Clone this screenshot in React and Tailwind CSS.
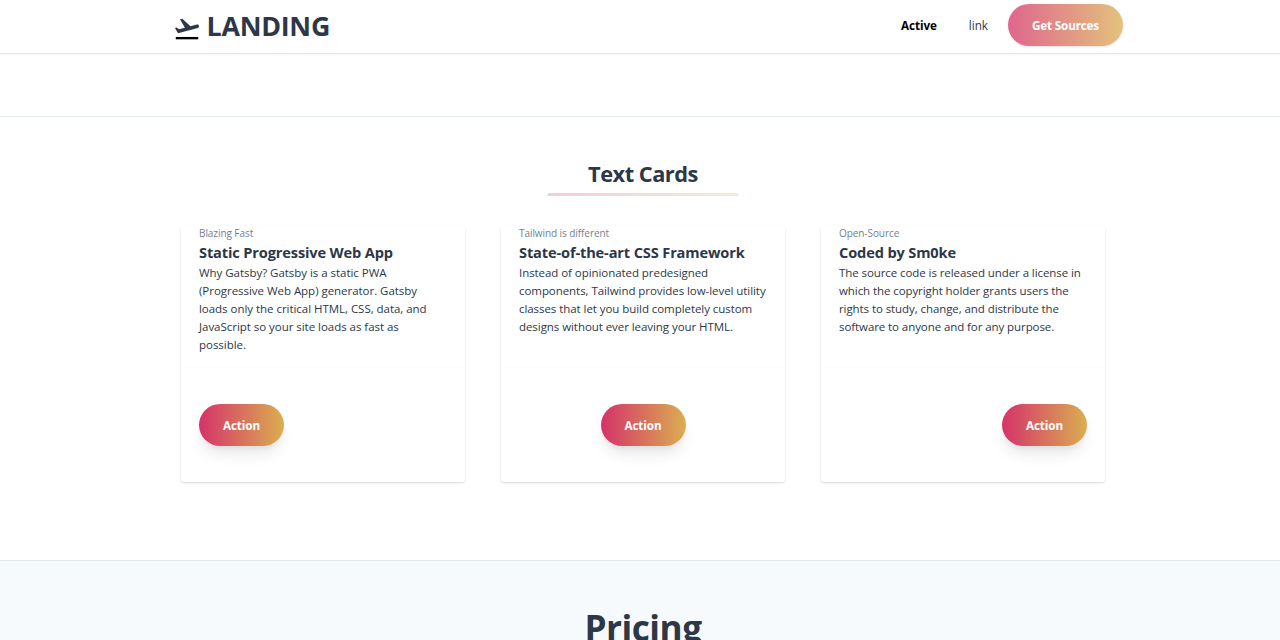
const cards = [
  {
    label: 'Blazing Fast',
    title: 'Static Progressive Web App',
    lines: [
      'Why Gatsby? Gatsby is a static PWA',
      '(Progressive Web App) generator. Gatsby',
      'loads only the critical HTML, CSS, data, and',
      'JavaScript so your site loads as fast as',
      'possible.',
    ],
    align: 'justify-start',
    tracking: 'tracking-[-0.035px]',
  },
  {
    label: 'Tailwind is different',
    title: 'State-of-the-art CSS Framework',
    lines: [
      'Instead of opinionated predesigned',
      'components, Tailwind provides low-level utility',
      'classes that let you build completely custom',
      'designs without ever leaving your HTML.',
    ],
    align: 'justify-center',
    tracking: 'tracking-[-0.06px]',
  },
  {
    label: 'Open-Source',
    title: 'Coded by Sm0ke',
    lines: [
      'The source code is released under a license in',
      'which the copyright holder grants users the',
      'rights to study, change, and distribute the',
      'software to anyone and for any purpose.',
    ],
    align: 'justify-end',
    tracking: 'tracking-[-0.08px]',
  },
];

const gradient = 'bg-[linear-gradient(90deg,#d53369_0%,#daae51_100%)]';
const cardShadow = 'shadow-[0_1px_3px_0_rgba(0,0,0,0.1),0_1px_2px_0_rgba(0,0,0,0.06)]';

function Logo() {
  return (
    <svg className="mt-1.5 h-6 w-6 shrink-0" viewBox="0 0 512.005 512.005">
      <rect x="16.539" y="425.626" width="479.767" height="50.502" fill="#000" />
      <path
        fill="#2d3748"
        d="M510.7 189.151C505.271 168.95 484.565 156.956 464.365 162.357L330.156 198.367L155.924 35.878L107.19 49.008L211.729 230.183L86.232 263.767L36.614 224.754L0 234.603L45.957 314.27L65.274 347.727L105.802 336.869L240.011 300.886L349.726 271.469L483.935 235.486C504.134 230.057 516.129 209.352 510.7 189.151Z"
      />
    </svg>
  );
}

function Header() {
  return (
    <header className="relative h-[53px] bg-white shadow-[0_1px_0_0_#e5e7e9,0_2px_1px_0_rgba(0,0,0,0.03)]">
      <div className="mx-auto flex h-[50px] w-[960px] items-center justify-between pl-3">
        <a className="flex items-center gap-[7.5px] pt-px text-[26.8px] leading-10 font-bold tracking-[-0.25px] text-[#2d3748]">
          <Logo />
          LANDING
        </a>
        <nav className="flex items-center text-[11.7px] leading-[18px]">
          <a className="font-bold tracking-[-0.1px] text-black">Active</a>
          <a className="ml-8 text-[#2d3748]">link</a>
          <button
            className={`ml-5 h-[42px] w-[115px] rounded-full font-bold tracking-[-0.17px] text-white opacity-75 ${gradient} ${cardShadow}`}
          >
            Get Sources
          </button>
        </nav>
      </div>
    </header>
  );
}

function Card({ card }) {
  return (
    <article className="w-80 px-[18px]">
      <div className={`h-[142px] rounded-t-[3px] bg-white px-[18px] ${cardShadow}`}>
        <p className="h-4 text-[10px] leading-[14px] tracking-[-0.07px] text-[#718096]">{card.label}</p>
        <h2 className="h-[22px] text-[14.6px] leading-5 font-bold tracking-[-0.14px] text-[#2d3748]">
          {card.title}
        </h2>
        <p className={`text-[11.5px] leading-[18px] whitespace-nowrap text-[#2d3748] ${card.tracking}`}>
          {card.lines.map((line) => (
            <span key={line} className="block">
              {line}
            </span>
          ))}
        </p>
      </div>
      <div className={`flex rounded-b-[3px] bg-white px-[18px] py-9 ${card.align} ${cardShadow}`}>
        <button
          className={`h-[42px] w-[85px] rounded-full pt-0.5 text-[11.7px] font-bold tracking-[-0.1px] text-white shadow-[0_10px_15px_-3px_rgba(0,0,0,0.1),0_4px_6px_-2px_rgba(0,0,0,0.05)] ${gradient}`}
        >
          Action
        </button>
      </div>
    </article>
  );
}

export default function App() {
  return (
    <div className="h-[640px] w-full overflow-hidden">
      <div className="w-[1286px] bg-white font-['Open_Sans',sans-serif]">
        <Header />
        <div className="h-16 border-b border-[#e2e8f0]" />
        <section className="h-[443px] pt-[39px]">
          <h1 className="text-center text-[21.8px] leading-9 font-bold tracking-[-0.5px] text-[#2d3748]">
            Text Cards
          </h1>
          <div className={`mx-auto mt-px h-[3px] w-48 rounded-t-[3px] opacity-25 ${gradient}`} />
          <div className="mx-auto mt-[30px] flex w-[960px]">
            {cards.map((card) => (
              <Card key={card.title} card={card} />
            ))}
          </div>
        </section>
        <section className="h-20 border-t border-[#e2e8f0] bg-[#f7fafc] pt-10">
          <h1 className="text-center text-[35.2px] leading-[52px] font-bold tracking-[-0.5px] text-[#2d3748]">
            Pricing
          </h1>
        </section>
      </div>
    </div>
  );
}
